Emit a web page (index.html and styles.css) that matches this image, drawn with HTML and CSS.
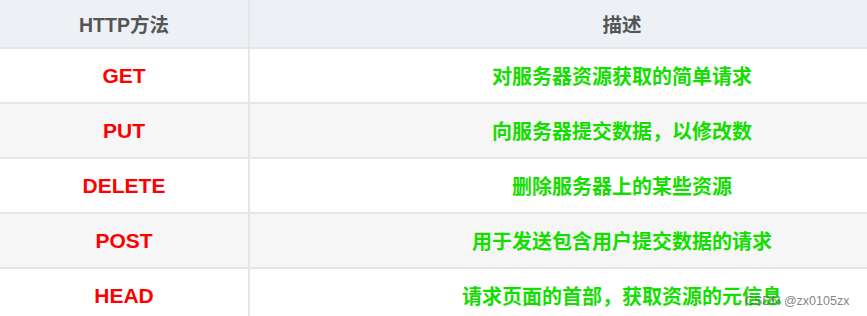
FILE: index.html
```html
<!DOCTYPE html>
<html lang="zh-CN">
<head>
<meta charset="utf-8">
<link rel="stylesheet" href="styles.css">
</head>
<body>
<div class="frame">
  <table class="methods">
    <thead>
      <tr><th class="c1">HTTP方法</th><th class="c2">描述</th></tr>
    </thead>
    <tbody>
      <tr><td class="m">GET</td><td class="d">对服务器资源获取的简单请求</td></tr>
      <tr class="alt"><td class="m">PUT</td><td class="d">向服务器提交数据，以修改数</td></tr>
      <tr><td class="m">DELETE</td><td class="d">删除服务器上的某些资源</td></tr>
      <tr class="alt"><td class="m">POST</td><td class="d">用于发送包含用户提交数据的请求</td></tr>
      <tr><td class="m">HEAD</td><td class="d">请求页面的首部，获取资源的元信息</td></tr>
    </tbody>
  </table>
  <div class="mark">CSDN @zx0105zx</div>
</div>
</body>
</html>
```
FILE: styles.css
```css
html, body {
  margin: 0;
  padding: 0;
  background: #ffffff;
}
.frame {
  position: relative;
  width: 867px;
  height: 316px;
  overflow: hidden;
}
.methods {
  border-collapse: collapse;
  width: 996px;
  table-layout: fixed;
  font-family: "Liberation Sans", "Noto Sans CJK SC", sans-serif;
}
.methods th, .methods td {
  padding: 0;
  text-align: center;
  vertical-align: middle;
  border: 2px solid #e6e6e6;
  font-weight: bold;
}
.methods tr > :first-child { border-left: none; }
.c1 { width: 248px; }
.methods th {
  height: 47px;
  background: #edf1f5;
  color: #555555;
  font-size: 19.5px;
  border-top: none;
}
.methods td {
  height: 53px;
  font-size: 21px;
}
.methods td.d { font-size: 20px; }
.methods tr.alt td { background: #f6f6f6; }
.m { color: #ff0000; }
.d { color: #14dd00; }
.mark {
  position: absolute;
  z-index: 1;
  left: 745px;
  top: 294px;
  font-family: "Liberation Sans", sans-serif;
  font-size: 12.5px;
  color: rgba(100, 100, 100, 0.8);
}
```
